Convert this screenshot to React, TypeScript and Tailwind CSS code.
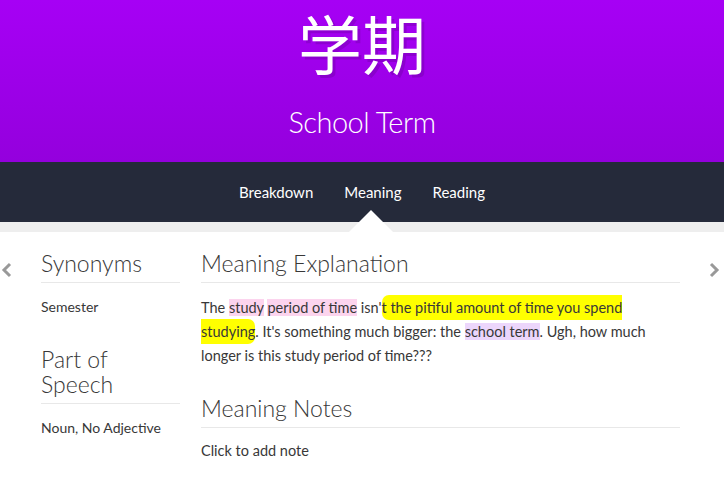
import React from 'react';

const Hl = ({ c, children }: { c: string; children: React.ReactNode }) => (
  <span className={c}>{children}</span>
);

function Chevron({ dir }: { dir: 'left' | 'right' }) {
  return (
    <svg width="12" height="16" viewBox="0 0 12 16" className="text-[#999]">
      <path
        d={dir === 'left' ? 'M9 2 L3 8 L9 14' : 'M3 2 L9 8 L3 14'}
        fill="none"
        stroke="currentColor"
        strokeWidth="3"
      />
    </svg>
  );
}

export default function App() {
  const font = { fontFamily: 'Lato, "Noto Sans CJK JP", sans-serif' };
  return (
    <div className="w-[724px] h-[477px] overflow-hidden bg-white text-[#383838]" style={font}>
      {/* Header */}
      <div className="h-[162px] bg-gradient-to-b from-[#a600f5] to-[#9400dd] flex flex-col items-center text-white">
        <div
          className="pt-[2px] text-[64px] leading-[78px] [text-shadow:3px_3px_0_rgba(0,0,0,0.12)]"
          style={{ fontFamily: '"Noto Sans CJK JP", sans-serif' }}
        >
          学期
        </div>
        <div className="mt-[22px] text-[29px] leading-[40px] font-light tracking-[-0.5px]">School Term</div>
      </div>

      {/* Nav */}
      <div className="relative h-[60px] bg-[#252a3a] flex items-center justify-center gap-[31px] text-[15px] text-white">
        <span>Breakdown</span>
        <span>Meaning</span>
        <span>Reading</span>
        <div className="absolute left-[349px] top-[48px] w-0 h-0 border-l-[22px] border-r-[22px] border-b-[22px] border-l-transparent border-r-transparent border-b-white z-10" />
      </div>
      <div className="h-[10px] bg-[#eeeeee]" />

      {/* Content */}
      <div className="flex">
        <div className="w-[41px] pt-[30px] pl-[1px]">
          <Chevron dir="left" />
        </div>
        <div className="w-[139px] pt-[16px]">
          <h3 className="text-[23px] font-light leading-[30px] pb-[4px] border-b border-[#e8e8e8]">Synonyms</h3>
          <p className="text-[14px] mt-[14px] leading-[20px]">Semester</p>
          <h3 className="mt-[30px] text-[23px] font-light leading-[25px] pb-[6px] border-b border-[#e8e8e8]">
            Part of Speech
          </h3>
          <p className="text-[14px] mt-[14px] leading-[20px]">Noun, No Adjective</p>
        </div>
        <div className="w-[479px] ml-[21px] pt-[16px]">
          <h3 className="text-[23px] font-light leading-[30px] pb-[4px] border-b border-[#e8e8e8]">
            Meaning Explanation
          </h3>
          <p className="text-[14.5px] leading-[24px] mt-[13px]">
            The <Hl c="bg-[#fcd4ee]">study</Hl> <Hl c="bg-[#fcd4ee]">period of time</Hl> isn'
            <Hl c="bg-[#ffff00] rounded-[7px] py-[4px]">t the pitiful amount of time you spend studying</Hl>. It's
            something much bigger: the <Hl c="bg-[#ecd6fc]">school term</Hl>. Ugh, how much longer is this study
            period of time???
          </p>
          <h3 className="mt-[25px] text-[23px] font-light leading-[30px] pb-[4px] border-b border-[#e8e8e8]">
            Meaning Notes
          </h3>
          <p className="text-[14.5px] leading-[24px] mt-[11px]">Click to add note</p>
        </div>
        <div className="flex-1 flex justify-end pt-[30px] pr-[4px]">
          <Chevron dir="right" />
        </div>
      </div>
    </div>
  );
}
